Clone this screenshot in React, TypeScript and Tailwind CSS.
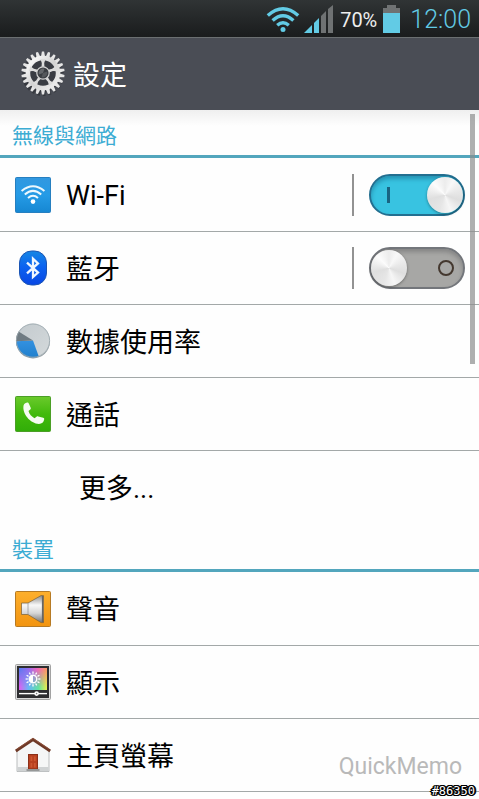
import React, { useState } from "react";

const wedge = (cx: number, cy: number, r: number, from: number, to: number) => {
  const pt = (deg: number) => {
    const a = (deg * Math.PI) / 180;
    return `${(cx + r * Math.cos(a)).toFixed(2)} ${(cy + r * Math.sin(a)).toFixed(2)}`;
  };
  return `M${cx} ${cy}L${pt(from)}A${r} ${r} 0 0 1 ${pt(to)}Z`;
};

function StatusWifi() {
  return (
    <svg width="34" height="28" viewBox="0 0 34 28" fill="none" stroke="#62cbe5" strokeWidth="3.4">
      <path d="M1.8 10.6Q17 -3 32.2 10.6" />
      <path d="M6.6 15.6Q17 6 27.4 15.6" />
      <path d="M11.2 20.2Q17 15.2 22.8 20.2" />
      <circle cx="17" cy="24.6" r="2.5" fill="#62cbe5" stroke="none" />
    </svg>
  );
}

function StatusSignal() {
  return (
    <svg width="30" height="28" viewBox="0 0 30 28">
      <path d="M0 28L8 20V28Z" fill="#62cbe5" />
      <path d="M10 28V18L15 13V28Z" fill="#62cbe5" />
      <path d="M17 28V11L22 6V28Z" fill="#6f7273" />
      <path d="M24 28V4L29 0V28Z" fill="#6f7273" />
    </svg>
  );
}

function StatusBattery() {
  return (
    <svg width="17" height="28" viewBox="0 0 17 28">
      <path d="M4 0H13V3H17V8H0V3H4Z" fill="#6f7273" />
      <path d="M0 8H17V28H0Z" fill="#62cbe5" />
    </svg>
  );
}

function GearIcon() {
  return (
    <svg width="44" height="46" viewBox="-22 -22 44 46">
      <defs>
        <linearGradient id="gear" x1="0" y1="0" x2="1" y2="1">
          <stop offset="0" stopColor="#ffffff" />
          <stop offset="0.5" stopColor="#d3d3d3" />
          <stop offset="1" stopColor="#f0f0f0" />
        </linearGradient>
      </defs>
      <g transform="translate(0 2)" fill="none" stroke="#2a2c32" opacity="0.6">
        <circle r="15" strokeWidth="5" />
        <circle r="19" strokeWidth="4" strokeDasharray="2.6 2.83" />
      </g>
      {Array.from({ length: 22 }, (_, i) => (
        <path key={i} d="M-2.1 -16L-1.1 -21.6H1.1L2.1 -16Z" fill="#e6e6e6" transform={`rotate(${(i * 360) / 22})`} />
      ))}
      <circle r="15" fill="#393c43" stroke="url(#gear)" strokeWidth="4.4" />
      {[0, 72, 144, 216, 288].map((a) => (
        <path key={a} d="M-1.6 -4L-1.2 -10L-2.6 -14H2.6L1.2 -10L1.6 -4Z" fill="#dcdcdc" transform={`rotate(${a})`} />
      ))}
      <circle r="6.2" fill="#3a3d42" stroke="#d4d4d4" strokeWidth="1.2" />
      <path d="M-4.2 1.5A4.5 4.5 0 0 1 1.5 -4.2L0 0Z" fill="#64676b" />
      <path d="M4.2 -1.5A4.5 4.5 0 0 1 -1.5 4.2L0 0Z" fill="#55585c" />
    </svg>
  );
}

function WifiIcon() {
  return (
    <svg width="36" height="36" viewBox="0 0 36 36">
      <defs>
        <linearGradient id="wifi" x1="0" y1="0" x2="0" y2="1">
          <stop offset="0" stopColor="#3298e0" />
          <stop offset="0.5" stopColor="#259be6" />
          <stop offset="1" stopColor="#1687d2" />
        </linearGradient>
      </defs>
      <rect x="0.5" y="0.5" width="35" height="35" rx="1" fill="url(#wifi)" stroke="#267fc0" />
      <g fill="none" stroke="#eef8fd" strokeWidth="2">
        <path d="M6.6 14Q18 4.4 29.4 14" />
        <path d="M9.8 17.6Q18 10.2 26.2 17.6" />
        <path d="M13 21Q18 16.6 23 21" />
      </g>
      <circle cx="18" cy="24.6" r="2.3" fill="#fff" />
    </svg>
  );
}

function BluetoothIcon() {
  return (
    <svg width="36" height="36" viewBox="0 0 36 36">
      <defs>
        <linearGradient id="bt" x1="0" y1="0" x2="0" y2="1">
          <stop offset="0" stopColor="#1687e4" />
          <stop offset="0.45" stopColor="#0c63f0" />
          <stop offset="1" stopColor="#0846e4" />
        </linearGradient>
      </defs>
      <rect x="4.5" y="1" width="27" height="34" rx="12" ry="12" fill="url(#bt)" stroke="#1b55b4" />
      <path d="M12 12.6L23 22.6L18 27V8.6L23 13.4L12 23.4" fill="none" stroke="#f2f7ff" strokeWidth="2.3" strokeLinejoin="miter" />
    </svg>
  );
}

function DataUsageIcon() {
  return (
    <svg width="36" height="36" viewBox="0 0 36 36">
      <defs>
        <linearGradient id="pie" x1="0" y1="0" x2="1" y2="1">
          <stop offset="0" stopColor="#c3cace" />
          <stop offset="1" stopColor="#d4d9db" />
        </linearGradient>
        <linearGradient id="pieBlue" x1="0" y1="0" x2="0" y2="1">
          <stop offset="0" stopColor="#3391e0" />
          <stop offset="1" stopColor="#2180cd" />
        </linearGradient>
      </defs>
      <circle cx="18" cy="18.4" r="17" fill="#8d979c" />
      <circle cx="18" cy="17.6" r="17" fill="url(#pie)" />
      <path d={wedge(18, 17.6, 17, 70, 178)} fill="url(#pieBlue)" />
      <path d={wedge(18, 17.6, 17, 178, 212)} fill="#6f7b82" />
      <circle cx="18" cy="17.6" r="16.6" fill="none" stroke="#9ba7ad" strokeWidth="0.8" />
    </svg>
  );
}

function CallIcon() {
  return (
    <svg width="36" height="36" viewBox="0 0 36 36">
      <defs>
        <linearGradient id="call" x1="0" y1="0" x2="0" y2="1">
          <stop offset="0" stopColor="#6bca2c" />
          <stop offset="0.5" stopColor="#42ba0c" />
          <stop offset="1" stopColor="#31ad08" />
        </linearGradient>
      </defs>
      <rect x="0.5" y="0.5" width="35" height="35" rx="1" fill="url(#call)" stroke="#4b9f26" />
      <path
        d="M8.6 9.2C9.3 7.4 11 6.6 12.5 6.5C13.2 6.5 13.5 6.9 13.8 7.6L15.7 11.8C16 12.6 15.8 13.1 15.2 13.6L13.5 15C14.3 18 16.6 20.7 19.5 22.2L21.5 20.7C22 20.3 22.6 20.2 23.2 20.4L28.2 21.8C29 22 29.3 22.5 29.2 23.3C28.8 26.1 26.8 28 24 28C15.4 27.5 6.8 17.5 8.6 9.2Z"
        fill="#f6fcf2"
      />
    </svg>
  );
}

function SoundIcon() {
  return (
    <svg width="36" height="36" viewBox="0 0 36 36">
      <defs>
        <linearGradient id="sound" x1="0" y1="0" x2="0" y2="1">
          <stop offset="0" stopColor="#fdaf2c" />
          <stop offset="1" stopColor="#f29410" />
        </linearGradient>
        <linearGradient id="cone" x1="0" y1="0" x2="0" y2="1">
          <stop offset="0" stopColor="#8c8c8c" />
          <stop offset="0.35" stopColor="#f8f8f8" />
          <stop offset="0.65" stopColor="#d6d6d6" />
          <stop offset="1" stopColor="#737373" />
        </linearGradient>
      </defs>
      <rect x="0.5" y="0.5" width="35" height="35" rx="1" fill="url(#sound)" stroke="#b67a24" />
      <path d="M6.5 12H13L26 4.6H28.5V31.6H26L13 23.5H6.5Z" fill="url(#cone)" stroke="#7a6037" strokeWidth="0.7" />
      <path d="M13 12V23.5" stroke="#999" strokeWidth="0.8" />
      <path d="M27.6 5V31.2" stroke="#666" strokeWidth="1.4" />
    </svg>
  );
}

function DisplayIcon() {
  return (
    <svg width="36" height="36" viewBox="0 0 36 36">
      <defs>
        <linearGradient id="hue" x1="0" y1="0" x2="1" y2="0">
          <stop offset="0" stopColor="#557df0" />
          <stop offset="0.35" stopColor="#9b6bf0" />
          <stop offset="0.65" stopColor="#ef68bd" />
          <stop offset="1" stopColor="#fb9a62" />
        </linearGradient>
        <linearGradient id="hueLow" x1="0" y1="0" x2="1" y2="0">
          <stop offset="0" stopColor="#e35bf0" />
          <stop offset="0.35" stopColor="#65b8f5" />
          <stop offset="0.7" stopColor="#63e3a0" />
          <stop offset="1" stopColor="#e8ee4e" />
        </linearGradient>
        <linearGradient id="fade" x1="0" y1="0" x2="0" y2="1">
          <stop offset="0.15" stopColor="#000" />
          <stop offset="0.65" stopColor="#fff" />
        </linearGradient>
        <mask id="low">
          <rect width="36" height="36" fill="url(#fade)" />
        </mask>
      </defs>
      <rect x="0.5" y="0.5" width="35" height="35" rx="1" fill="#d9d9d9" stroke="#a2a2a2" />
      <rect x="2" y="2" width="32" height="32" fill="#2d2d30" />
      <rect x="4" y="4" width="28" height="22" fill="url(#hue)" />
      <rect x="4" y="4" width="28" height="22" fill="url(#hueLow)" mask="url(#low)" />
      {Array.from({ length: 12 }, (_, i) => (
        <path key={i} d="M18 7.6V9.8" stroke="#fff" strokeWidth="1.3" transform={`rotate(${i * 30} 18 15)`} />
      ))}
      <circle cx="18" cy="15" r="3.8" fill="none" stroke="#fff" strokeWidth="1.4" />
      <path d="M18 11.2A3.8 3.8 0 0 0 18 18.8Z" fill="#fff" />
      <path d="M4 29.6H32" stroke="#fff" strokeWidth="1.4" />
      <circle cx="21.6" cy="29.6" r="2.3" fill="#fff" />
      <circle cx="21.6" cy="29.6" r="0.8" fill="#777" />
    </svg>
  );
}

function HomeIcon() {
  return (
    <svg width="36" height="36" viewBox="0 0 36 36">
      <path d="M2 13L18 3L34 13V34.5H2Z" fill="#f5f6f6" stroke="#a9adae" strokeWidth="0.8" />
      <path d="M2.4 30H33.6V34.2H2.4Z" fill="#cfd2d3" />
      <path d="M0.8 14L18 2.6L35.2 14" fill="none" stroke="#6d3826" strokeWidth="3" />
      <path d="M2 12L18 1.4L34 12" fill="none" stroke="#94563d" strokeWidth="0.8" />
      <rect x="13.5" y="17.5" width="9" height="14.5" fill="#b8401f" stroke="#8b3018" />
      <path d="M15.5 19.5H17.3V24H15.5ZM18.9 19.5H20.7V24H18.9ZM15.5 26H17.3V30.5H15.5ZM18.9 26H20.7V30.5H18.9Z" fill="#cc5630" />
      <path d="M11.5 32H24.5V34H11.5Z" fill="#969898" />
    </svg>
  );
}

interface ToggleProps {
  label: string;
  defaultOn: boolean;
}

function Toggle({ label, defaultOn }: ToggleProps) {
  const [on, setOn] = useState(defaultOn);

  return (
    <div className="flex h-[42px] items-center border-l-2 border-[#929292] pl-[15px]">
      <label
        className={`flex h-[42px] w-24 cursor-pointer items-center justify-between rounded-full border-2 ${
          on
            ? "flex-row-reverse border-[#236f90] bg-[#38c3e1] shadow-[inset_0_3px_4px_#2493b3]"
            : "border-[#73767b] bg-[#a7a7a5] shadow-[inset_0_3px_4px_#858585]"
        }`}
      >
        <input
          type="checkbox"
          role="switch"
          aria-label={label}
          checked={on}
          onChange={(e) => setOn(e.target.checked)}
          className="sr-only"
        />
        <span className="size-9 rounded-full bg-[conic-gradient(#ececec,#f8f8f8_30deg,#e8e8e8_75deg,#dedede_110deg,#f6f6f6_160deg,#e6e6e6_200deg,#dfdfdf_255deg,#fcfcfc_315deg,#ececec)] shadow-[0_1px_3px_#00000060]" />
        {on ? (
          <span className="ml-4 h-4 w-[3px] bg-[#196482]" />
        ) : (
          <span className="mr-[9px] size-4 rounded-full border-2 border-[#44382f]" />
        )}
      </label>
    </div>
  );
}

function SectionTitle({ children }: { children: React.ReactNode }) {
  return (
    <h2 className="flex h-12 items-center border-b-3 border-[#53a6bd] px-3 pt-[6px] text-[21px] leading-6 text-[#3cacd3]">
      {children}
    </h2>
  );
}

interface RowProps {
  label: string;
  icon?: React.ReactNode;
  toggle?: boolean;
}

function Row({ label, icon, toggle }: RowProps) {
  return (
    <li className="flex h-[73px] items-center border-t border-[#a3a8a8] pr-[14px] first:border-t-0">
      <button type="button" className={`flex h-full flex-1 items-center text-left ${icon ? "gap-[15px] pl-[15px]" : "pl-[79px]"}`}>
        {icon}
        <span className="pt-[3px]">{label}</span>
      </button>
      {toggle !== undefined && <Toggle label={label} defaultOn={toggle} />}
    </li>
  );
}

export default function App() {
  return (
    <div className="relative min-h-screen overflow-hidden bg-[#fefefe] font-[Roboto,'Noto_Sans_CJK_TC',sans-serif] text-[27px] leading-8 text-black">
      <div className="flex h-[38px] items-center justify-end border-b border-[#6b6f71] bg-linear-to-b from-[#303435] to-[#1a1c1d] pr-2">
        <StatusWifi />
        <span className="ml-1">
          <StatusSignal />
        </span>
        <span className="ml-[6px] pt-[3px] text-xl text-[#eeeeee]">70%</span>
        <span className="ml-[6px]">
          <StatusBattery />
        </span>
        <span className="ml-[10px] pt-[3px] text-[25px] font-light text-[#62cbe5]">12:00</span>
      </div>

      <header className="flex h-[72px] items-center gap-2 bg-[#4a4d55] pl-[21px] text-white">
        <GearIcon />
        <h1 className="pt-[3px]">設定</h1>
      </header>

      <main className="relative bg-linear-to-b from-[#efefef] to-[#fefefe] to-[16px]">
        <SectionTitle>無線與網路</SectionTitle>
        <ul className="pb-px">
          <Row label="Wi-Fi" icon={<WifiIcon />} toggle={true} />
          <Row label="藍牙" icon={<BluetoothIcon />} toggle={false} />
          <Row label="數據使用率" icon={<DataUsageIcon />} />
          <Row label="通話" icon={<CallIcon />} />
          <Row label="更多..." />
        </ul>
        <SectionTitle>裝置</SectionTitle>
        <ul className="border-b border-[#a3a8a8]">
          <Row label="聲音" icon={<SoundIcon />} />
          <Row label="顯示" icon={<DisplayIcon />} />
          <Row label="主頁螢幕" icon={<HomeIcon />} />
        </ul>
        <div className="absolute top-1 right-1 h-[250px] w-[5px] bg-[#8b8d8d]/70" />
      </main>

      <span className="absolute right-[17px] bottom-4 text-[23px] leading-8 text-[#b9b9b9]">QuickMemo</span>
      <span className="absolute right-1 bottom-0 font-['DejaVu_Sans_Mono',monospace] text-xs leading-4 text-white [text-shadow:1px_0_#000,-1px_0_#000,0_1px_#000,0_-1px_#000,1px_1px_#000,-1px_-1px_#000,1px_-1px_#000,-1px_1px_#000,2px_0_#000,-2px_0_#000]">
        #86350
      </span>
    </div>
  );
}
